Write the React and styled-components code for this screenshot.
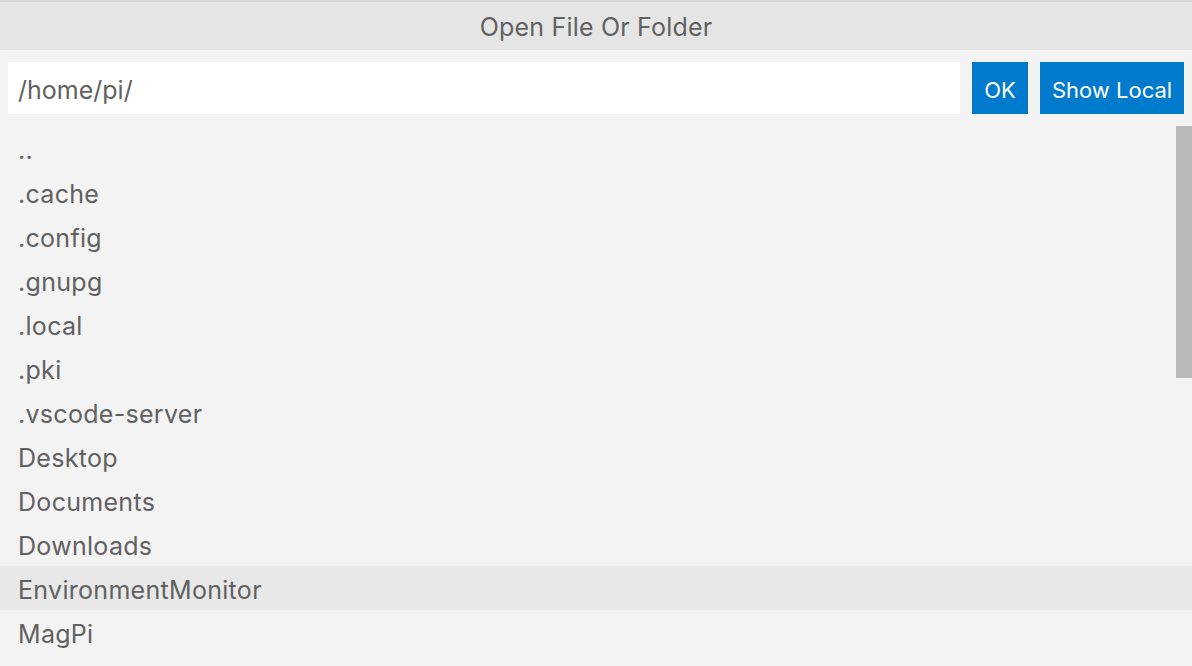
import React from "react";
import styled, { createGlobalStyle } from "styled-components";

const Global = createGlobalStyle`
  html, body { margin: 0; padding: 0; background: #f3f3f3; }
  body { font-family: Inter, "Noto Sans", sans-serif; }
`;

const Dialog = styled.div`
  width: 1192px;
  height: 666px;
  overflow: hidden;
  background: #f3f3f3;
  border-top: 2px solid #d6d6d6;
  box-sizing: border-box;
  display: flex;
  flex-direction: column;
`;

const TitleBar = styled.div`
  height: 48px;
  box-sizing: border-box;
  padding-top: 2px;
  background: #e5e5e5;
  color: #616161;
  font-size: 25px;
  letter-spacing: 0.2px;
  display: flex;
  align-items: center;
  justify-content: center;
`;

const InputRow = styled.div`
  display: flex;
  gap: 12px;
  padding: 12px 8px 12px 8px;
`;

const PathInput = styled.div`
  flex: 1;
  height: 52px;
  box-sizing: border-box;
  padding: 3px 0 0 10px;
  background: #ffffff;
  color: #616161;
  font-size: 25px;
  display: flex;
  align-items: center;
`;

const Button = styled.div`
  height: 52px;
  box-sizing: border-box;
  padding-top: 3px;
  background: #007acc;
  color: #ffffff;
  font-size: 22px;
  display: flex;
  align-items: center;
  justify-content: center;
  width: ${(p) => p.$w}px;
`;

const ListWrap = styled.div`
  position: relative;
  flex: 1;
`;

const Row = styled.div`
  height: 44px;
  box-sizing: border-box;
  padding: 3px 0 0 18px;
  display: flex;
  align-items: center;
  font-size: 25px;
  letter-spacing: 0.3px;
  color: #616161;
  background: ${(p) => (p.$active ? "#e8e8e8" : "transparent")};
`;

const ScrollThumb = styled.div`
  position: absolute;
  top: 0;
  right: 0;
  width: 16px;
  height: 252px;
  background: #bababa;
`;

const items = [
  "..",
  ".cache",
  ".config",
  ".gnupg",
  ".local",
  ".pki",
  ".vscode-server",
  "Desktop",
  "Documents",
  "Downloads",
  "EnvironmentMonitor",
  "MagPi",
];

export default function App() {
  return (
    <>
      <Global />
      <Dialog>
        <TitleBar>Open File Or Folder</TitleBar>
        <InputRow>
          <PathInput>/home/pi/</PathInput>
          <Button $w={56}>OK</Button>
          <Button $w={144}>Show Local</Button>
        </InputRow>
        <ListWrap>
          {items.map((it) => (
            <Row key={it} $active={it === "EnvironmentMonitor"}>
              {it}
            </Row>
          ))}
          <ScrollThumb />
        </ListWrap>
      </Dialog>
    </>
  );
}
